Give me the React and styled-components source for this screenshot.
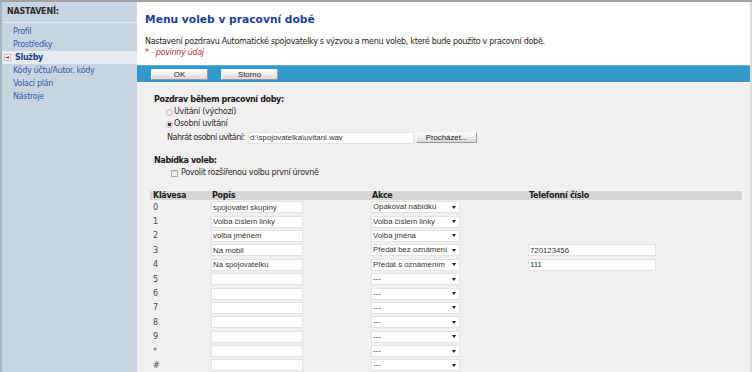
import React from "react";
import styled, { createGlobalStyle } from "styled-components";

const labelFont = `"DejaVu Sans", Verdana, sans-serif`;
const fieldFont = `"Liberation Sans", Arial, sans-serif`;

const GlobalStyle = createGlobalStyle`
  html, body { margin: 0; padding: 0; }
  body { background: #f1efef; font-family: ${labelFont}; overflow: hidden; }
  * { box-sizing: border-box; }
`;

const Page = styled.div`
  display: flex;
  width: 752px;
  height: 372px;
  border-top: 2px solid #a4a4a4;
  overflow: hidden;
`;

const Sidebar = styled.nav`
  flex: 0 0 137px;
  background: #c9d4e2;
  border-left: 2px solid #a9b3bf;
`;

const SideHeader = styled.div`
  height: 21px;
  padding-left: 5px;
  font: bold 8px/20px ${labelFont};
  letter-spacing: -0.2px;
  color: #2b2b2b;
  border-bottom: 1px solid #e3e9f0;
`;

const MenuList = styled.ul`
  list-style: none;
  margin: 0;
  padding: 2px 0 0;
`;

const MenuItem = styled.li`
  display: flex;
  align-items: center;
  gap: 4px;
  height: 13px;
  padding-left: ${(p) => (p.$active ? "2px" : "11px")};
  background: ${(p) => (p.$active ? "#e6ebf1" : "transparent")};
  font: ${(p) => (p.$active ? "bold" : "normal")} 8px/13px ${labelFont};
  letter-spacing: -0.3px;
  color: ${(p) => (p.$active ? "#1d3c8c" : "#3560a8")};
  white-space: nowrap;
`;

const Main = styled.main`
  flex: 1;
  min-width: 0;
  display: flex;
  flex-direction: column;
  border-right: 2px solid #dcdcdc;
  overflow: hidden;
`;

const Header = styled.header`
  flex: none;
  background: #fff;
  padding: 10px 8px 7px;
`;

const Title = styled.h1`
  margin: 0;
  font: bold 10.7px/16px ${labelFont};
  color: #1b3f9b;
`;

const Desc = styled.p`
  margin: 8px 0 0;
  font: 8px/11px ${labelFont};
  letter-spacing: -0.3px;
  color: #1e1e1e;
  white-space: nowrap;
`;

const Required = styled.p`
  margin: 0;
  font: italic 8px/11px ${labelFont};
  letter-spacing: -0.3px;
  color: #c0302a;
`;

const Toolbar = styled.div`
  flex: none;
  display: flex;
  align-items: center;
  gap: 13px;
  height: 18px;
  padding-left: 14px;
  background: #3399cc;
  border-top: 1px solid #62b0da;
  border-bottom: 1px solid #f8f8f8;
`;

const Button = styled.button`
  flex: none;
  width: ${(p) => p.$w || 57}px;
  height: 11px;
  padding: 0;
  margin-left: ${(p) => p.$ml || 0}px;
  font: 7.8px/9px ${fieldFont};
  color: #222;
  background: linear-gradient(#fdfdfd, #d9d9d9);
  border: 1px solid;
  border-color: #f4f4f4 #9a9a9a #9a9a9a #f4f4f4;
  border-radius: 1px;
`;

const Content = styled.section`
  flex: 1;
  min-height: 0;
  padding: 11px 0 0 13px;
`;

const FormBlock = styled.div`
  padding-left: 4px;
  display: flex;
  flex-direction: column;
`;

const SectionTitle = styled.div`
  flex: none;
  font: bold 8px/12px ${labelFont};
  letter-spacing: -0.35px;
  color: #1a1a1a;
  margin-top: ${(p) => p.$mt || 0}px;
`;

const OptionRow = styled.label`
  flex: none;
  display: flex;
  align-items: center;
  gap: ${(p) => p.$gap || 1}px;
  height: 12px;
  padding-left: ${(p) => p.$indent || 12}px;
  font: 8px/12px ${labelFont};
  letter-spacing: -0.3px;
  color: #2a2a2a;
`;

const RadioDot = styled.span`
  flex: none;
  width: 7px;
  height: 7px;
  border-radius: 50%;
  border: 1px solid #b8b8b8;
  background: ${(p) =>
    p.$checked
      ? "radial-gradient(circle, #3c3c3c 0 1.5px, #e9e9e9 2px)"
      : "#ececec"};
`;

const CheckBox = styled.span`
  flex: none;
  width: 7px;
  height: 7px;
  border: 1px solid #a9a9a9;
  background: linear-gradient(#e2e2e2, #fafafa);
`;

const UploadRow = styled.div`
  flex: none;
  display: flex;
  align-items: center;
  height: 13px;
  margin-top: 1px;
  padding-left: 13px;
  font: 8px/13px ${labelFont};
  letter-spacing: -0.5px;
  color: #2a2a2a;
`;

const UploadLabel = styled.span`
  flex: none;
  width: 81px;
  white-space: nowrap;
`;

const TextField = styled.input`
  flex: none;
  width: ${(p) => p.$w}px;
  height: 12px;
  padding: 0 1px;
  margin: 0;
  border: 1px solid #e3e3e3;
  background: #fff;
  font: 7.8px/10px ${fieldFont};
  letter-spacing: 0;
  color: #333;
  outline: none;
`;

const Table = styled.div`
  display: grid;
  grid-template-columns: 61px 160px 157px 214px;
  grid-template-rows: 9px;
  grid-auto-rows: 14.4px;
  margin-top: 12px;
`;

const HeadCell = styled.div`
  background: #d6d6d6;
  padding-left: ${(p) => p.$pl || 1}px;
  font: bold 8px/9px ${labelFont};
  letter-spacing: -0.3px;
  color: #222;
  white-space: nowrap;
`;

const Cell = styled.div`
  display: flex;
  align-items: center;
  padding-left: ${(p) => p.$pl || 0}px;
  font: 8px ${labelFont};
  color: #4a4a4a;
`;

const SelectBox = styled.div`
  display: flex;
  align-items: center;
  justify-content: space-between;
  width: 89px;
  height: 12px;
  padding: 0 3px 0 1px;
  background: #fff;
  border: 1px solid #e3e3e3;
  font: 7.8px/10px ${fieldFont};
  color: #333;
  white-space: nowrap;
`;

const Caret = styled.span`
  width: 0;
  height: 0;
  border-left: 2.5px solid transparent;
  border-right: 2.5px solid transparent;
  border-top: 3px solid #222;
`;

const ArrowIcon = () => (
  <svg width="7" height="7" viewBox="0 0 7 7">
    <rect x="0.5" y="0.5" width="6" height="6" fill="#fff" stroke="#c4c4c4" />
    <path d="M1.5 3.5h3.5M3.6 2.1l1.5 1.4-1.5 1.4" stroke="#d22" strokeWidth="1" fill="none" />
  </svg>
);

const menu = ["Profil", "Prostředky", "Služby", "Kódy účtu/Autor. kódy", "Volací plán", "Nástroje"];

const rows = [
  ["0", "spojovatel skupiny", "Opakovat nabídku", null],
  ["1", "Volba číslem linky", "Volba číslem linky", null],
  ["2", "volba jménem", "Volba jména", null],
  ["3", "Na mobil", "Předat bez oznámení", "720123456"],
  ["4", "Na spojovatelku", "Předat s oznámením", "111"],
  ["5", "", "---", null],
  ["6", "", "---", null],
  ["7", "", "---", null],
  ["8", "", "---", null],
  ["9", "", "---", null],
  ["*", "", "---", null],
  ["#", "", "---", null],
];

export default function App() {
  return (
    <>
      <GlobalStyle />
      <Page>
        <Sidebar>
          <SideHeader>NASTAVENÍ:</SideHeader>
          <MenuList>
            {menu.map((m) => (
              <MenuItem key={m} $active={m === "Služby"}>
                {m === "Služby" && <ArrowIcon />}
                {m}
              </MenuItem>
            ))}
          </MenuList>
        </Sidebar>
        <Main>
          <Header>
            <Title>Menu voleb v pracovní době</Title>
            <Desc>
              Nastavení pozdravu Automatické spojovatelky s výzvou a menu voleb, které bude použito v pracovní době.
            </Desc>
            <Required>* - povinný údaj</Required>
          </Header>
          <Toolbar>
            <Button>OK</Button>
            <Button>Storno</Button>
          </Toolbar>
          <Content>
            <FormBlock>
              <SectionTitle>Pozdrav během pracovní doby:</SectionTitle>
              <OptionRow>
                <RadioDot />
                Uvítání (výchozí)
              </OptionRow>
              <OptionRow>
                <RadioDot $checked />
                Osobní uvítání
              </OptionRow>
              <UploadRow>
                <UploadLabel>Nahrát osobní uvítání:</UploadLabel>
                <TextField $w={166} defaultValue="d:\spojovatelka\uvitani.wav" />
                <Button $w={61} $ml={2}>Procházet...</Button>
              </UploadRow>
              <SectionTitle $mt={11}>Nabídka voleb:</SectionTitle>
              <OptionRow $indent={17} $gap={3}>
                <CheckBox />
                Povolit rozšířenou volbu první úrovně
              </OptionRow>
            </FormBlock>
            <Table>
              <HeadCell $pl={3}>Klávesa</HeadCell>
              <HeadCell>Popis</HeadCell>
              <HeadCell>Akce</HeadCell>
              <HeadCell>Telefonní číslo</HeadCell>
              {rows.map(([k, d, a, t]) => (
                <React.Fragment key={k}>
                  <Cell $pl={3}>{k}</Cell>
                  <Cell>
                    <TextField $w={92} defaultValue={d} />
                  </Cell>
                  <Cell>
                    <SelectBox>
                      <span>{a}</span>
                      <Caret />
                    </SelectBox>
                  </Cell>
                  <Cell>{t !== null && <TextField $w={128} defaultValue={t} />}</Cell>
                </React.Fragment>
              ))}
            </Table>
          </Content>
        </Main>
      </Page>
    </>
  );
}
